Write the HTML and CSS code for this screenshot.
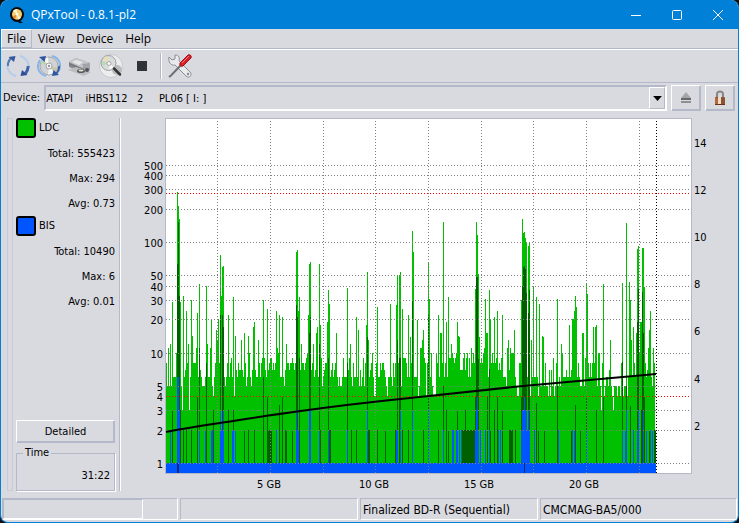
FILE: index.html
```html
<!DOCTYPE html>
<html lang="en">
<head>
<meta charset="utf-8">
<title>QPxTool - 0.8.1-pl2</title>
<link rel="stylesheet" href="styles.css">
</head>
<body>
<div class="window">
  <header class="titlebar">
    <svg class="logo" viewBox="0 0 16 16" aria-hidden="true">
      <ellipse cx="8" cy="7.5" rx="7" ry="7.5" fill="#080808"/>
      <path d="M8 12l6 4h-4z" fill="#080808"/>
      <ellipse cx="8" cy="7.3" rx="5" ry="5.4" fill="#f5cf70"/>
      <path d="M8 7.3L4 4A5 5.4 0 0 1 8 1.9z" fill="#fff4cf"/>
      <path d="M8 7.3l4 3.5A5 5.4 0 0 1 9 12.6z" fill="#fff4cf"/>
      <path d="M8 7.3L3.4 9.400A5 5.4 0 0 0 6 12.200z" fill="#e8892e"/>
      <circle cx="8" cy="7.3" r="1.3" fill="#fff"/>
    </svg>
    <h1 class="title">QPxTool - 0.8.1-pl2</h1>
    <button class="win-button" aria-label="Minimize"><svg viewBox="0 0 12 12"><path d="M1 6.5h10"/></svg></button>
    <button class="win-button" aria-label="Maximize"><svg viewBox="0 0 12 12"><rect x="1.5" y="1.5" width="9" height="9" rx="1"/></svg></button>
    <button class="win-button" aria-label="Close"><svg viewBox="0 0 12 12"><path d="M1 1l10 10M11 1L1 11"/></svg></button>
  </header>

  <nav class="menubar">
    <button class="menu menu-active">File</button>
    <button class="menu">View</button>
    <button class="menu">Device</button>
    <button class="menu">Help</button>
  </nav>

  <div class="toolbar">
    <button class="tool" aria-label="Rescan bus">
      <svg viewBox="0 0 24 24">
        <path d="M10 22C2 20-1 12 4 5" fill="none" stroke="#b4cdec" stroke-width="2"/>
        <path d="M2 12C1.500 9 2.500 7 5 4" fill="none" stroke="#5279b8" stroke-width="2"/>
        <path d="M2.500 3L9.500 2l-1.500 6z" fill="#34569f"/>
        <path d="M14 2c8 2 11 10 6 17" fill="none" stroke="#b4cdec" stroke-width="2"/>
        <path d="M22 12c.5 3-.5 5-3 8" fill="none" stroke="#3d62aa" stroke-width="3"/>
        <path d="M21.500 21l-7 1 1.500-6z" fill="#2d4f98"/>
      </svg>
    </button>
    <button class="tool" aria-label="Update device info">
      <svg viewBox="0 0 24 24">
        <circle cx="12" cy="12" r="9" fill="#d0d2d4" stroke="#a2a5a9"/>
        <path d="M12 12L6 5.500a9 9 0 0 1 5-2.300z" fill="#f7f7ee"/>
        <path d="M12 12l5 6.500a9 9 0 0 1-6 2z" fill="#f2f4f4"/>
        <path d="M12 12L3.500 9l2-3.500z" fill="#b6d6b6"/>
        <path d="M12 12l8.500 2-2 4z" fill="#c6c5ac"/>
        <circle cx="12" cy="12" r="3" fill="#f2f2f2" stroke="#a4a6aa"/>
        <circle cx="12" cy="12" r="1" fill="#777b80"/>
        <path d="M9 22C1 20-1 12 3 6" fill="none" stroke="#86b4e8" stroke-width="2"/>
        <path d="M2 3l7-1-1.500 6z" fill="#2d55a3"/>
        <path d="M15 2c8 2 10 10 6 16" fill="none" stroke="#86b4e8" stroke-width="2"/>
        <path d="M22 12c.5 3-.5 5-3 8" fill="none" stroke="#3d62aa" stroke-width="2"/>
        <path d="M22 21l-7 1 1.500-6z" fill="#2d55a3"/>
      </svg>
    </button>
    <button class="tool" aria-label="Device info">
      <svg viewBox="0 0 24 24">
        <path d="M1 8l7-4 14 5v7l-8 3L1 13z" fill="#8e9196"/>
        <path d="M1 8l7-4 14 5-8 5z" fill="#c4c6ca"/>
        <path d="M8 6l7 2-4 3-7-3z" fill="#e4e5e7"/>
        <path d="M1 9l13 5v2L1 11z" fill="#75787e"/>
        <path d="M0 16l8-3 15 5-7 4z" fill="#bbbdc0"/>
        <ellipse cx="13" cy="17" rx="4" ry="2" fill="#55585d"/>
        <ellipse cx="13" cy="16.500" rx="2.500" ry="1" fill="#e9e4cd"/>
        <path d="M14 10l8-1v6l-5 2z" fill="#a1a4a8"/>
        <circle cx="19" cy="16" r="2" fill="#505359"/>
      </svg>
    </button>
    <button class="tool" aria-label="Media info">
      <svg viewBox="0 0 24 24">
        <circle cx="12" cy="12" r="11.500" fill="#ededed" stroke="#c6c7c9"/>
        <circle cx="18" cy="16" r="5" fill="#b9bbbe"/>
        <circle cx="9.500" cy="9" r="7.500" fill="#d9dbdc" stroke="#9da0a4"/>
        <path d="M9.500 9L4 5a7 7 0 0 1 4-3z" fill="#eadfae"/>
        <path d="M9.500 9L4 12a7 7 0 0 1-1-5z" fill="#b9d9ba"/>
        <path d="M9.500 9l5 4a7 7 0 0 1-4 2.500z" fill="#f7f7f7"/>
        <circle cx="10" cy="9.500" r="2" fill="#fafafa" stroke="#a4a5a7"/>
        <path d="M15 14.500l6 6" stroke="#343434" stroke-width="2.500" stroke-linecap="round"/>
      </svg>
    </button>
    <button class="tool" aria-label="Stop">
      <svg viewBox="0 0 24 24"><rect x="7" y="7" width="10" height="10" fill="#303337"/></svg>
    </button>
    <span class="separator"></span>
    <button class="tool" aria-label="Preferences">
      <svg viewBox="0 0 24 24">
        <path d="M1 3l3 3 3-1V1c4 0 5 3 4 6l11 11c3 3-1 7-4 4L7 11C3 12 0 8 1 3z" fill="#e9eaec" stroke="#8a8d91"/>
        <circle cx="20" cy="20" r="1.200" fill="#8a8d91"/>
        <path d="M13 11L3 21.500l-2 1.500" fill="none" stroke="#6d7074" stroke-width="2"/>
        <path d="M12 9l8-8c2-1 4 1 3 3l-8 8c-2 1-4-1-3-3z" fill="#d8202a" stroke="#9d1019"/>
        <path d="M14 9l7-7" stroke="#f27d80"/>
      </svg>
    </button>
  </div>

  <div class="device-row">
    <label for="device">Device:</label>
    <div class="combo">
      <select id="device"><option>ATAPI &nbsp;&nbsp; iHBS112 &nbsp; 2 &nbsp;&nbsp;&nbsp; PL06 [ I: ]</option></select>
      <span class="combo-arrow"><svg viewBox="0 0 7 4"><path d="M0 0h7L3.500 4z"/></svg></span>
    </div>
    <button class="push icon-push" aria-label="Eject">
      <svg viewBox="0 0 14 16"><path d="M7 2l5 6H2z" fill="#a4a6a8"/><path d="M2 8h10v2H2z" fill="#66696c"/><path d="M2 11h10v2H2z" fill="#8d9092"/></svg>
    </button>
    <button class="push icon-push" aria-label="Lock">
      <svg viewBox="0 0 14 16">
        <path d="M4 8V4c0-3.500 6-3.500 6 0v4" fill="none" stroke="#8d8581" stroke-width="2"/>
        <rect x="2" y="7" width="10" height="8" rx="1" fill="#8a5333"/>
        <path d="M2 8h3v6H2z" fill="#b06840"/><path d="M5 7h3v8H5z" fill="#f3d9c0"/><path d="M2 14h10v1H2z" fill="#6b3217"/>
      </svg>
    </button>
  </div>

  <main class="content">
    <aside class="panel">
      <div class="grip"></div>
      <div class="stats">
        <section class="series">
          <h2 class="series-name"><span class="swatch swatch-ldc"></span>LDC</h2>
          <p>Total: 555423</p><p>Max: 294</p><p>Avg: 0.73</p>
        </section>
        <section class="series">
          <h2 class="series-name"><span class="swatch swatch-bis"></span>BIS</h2>
          <p>Total: 10490</p><p>Max: 6</p><p>Avg: 0.01</p>
        </section>
        <button class="push detailed">Detailed</button>
        <fieldset class="time"><legend>Time</legend>31:22</fieldset>
      </div>
      <div class="divider"></div>
    </aside>
    <svg class="chart" viewBox="0 0 616 384" role="img" aria-label="LDC and BIS errors with read speed">
      <rect class="plot-frame" x="43" y="5" width="527" height="356"/>
      <rect class="plot-back" x="44" y="6" width="525" height="354"/>
      <g transform="translate(44 6)">
        <path id="ldc" class="ldc"/>
        <path id="overlap" class="overlap"/>
        <rect class="bis" x="0" y="344" width="490" height="10"/>
        <path id="bis" class="bis"/>
        <path class="peak" d="M11 344h2v10h-2zM358 344h1v10h-1z"/>
        <path id="grid" class="grid"/>
        <path class="grid limit" d="M0 74.500H524M0 277.500H524"/>
        <path class="grid end" d="M490.500 2V354"/>
        <path class="speed" d="M0 313C15 310 34 307 54 304C80 300 105 296 131 292.500C170 287 205 283 244 279C282 275 320 271 357 267C400 263 445 259 490 255"/>
      </g>
      <g id="labels"></g>
    </svg>
  </main>

  <footer class="statusbar">
    <div class="cell"><div class="progress"></div></div>
    <div class="cell"></div>
    <div class="cell">Finalized BD-R (Sequential)</div>
    <div class="cell cell-last">CMCMAG-BA5/000</div>
  </footer>
</div>
<script src="chart.js"></script>
</body>
</html>
```
FILE: styles.css
```css
:root {
  --face: #d9dae0;
  --light: #fff;
  --shade: #b4b9c9;
  --accent: #0080d7;
}

* { box-sizing: border-box; }

body {
  margin: 0;
  background: #101010;
  font: 11px/16px "DejaVu Sans Condensed", "DejaVu Sans", sans-serif;
  color: #000;
}

button, select { font: inherit; color: inherit; border: 0; padding: 0; background: none; }
h1, h2, p { margin: 0; font-size: inherit; font-weight: normal; }
svg { display: block; }

.window {
  display: flex;
  flex-direction: column;
  min-height: 100vh;
  background: var(--face);
  border: 1px solid var(--accent);
  border-top: 0;
  border-radius: 8px;
  overflow: hidden;
}

.titlebar {
  display: flex;
  align-items: center;
  height: 29px;
  padding-left: 8px;
  background: var(--accent);
  color: #fff;
}
.logo { width: 16px; height: 16px; margin-right: 6px; }
.title { flex: 1; font: 12px/16px "Open Sans", sans-serif; }
.win-button { display: grid; place-items: center; width: 41px; height: 28px; }
.win-button svg { width: 12px; height: 12px; fill: none; stroke: #fff; }

.menubar {
  display: flex;
  height: 21px;
  border-bottom: 1px solid var(--light);
  box-shadow: inset 0 -1px var(--shade);
  font: 12px/16px "Open Sans", sans-serif;
}
.menu { height: 19px; padding: 0 6px; }
.menu-active { padding: 0 5px; border: 1px solid var(--shade); border-top-color: var(--light); border-left-color: var(--light); }

.toolbar {
  display: flex;
  align-items: center;
  height: 33px;
  padding-left: 1px;
  border-bottom: 1px solid var(--shade);
}
.tool { display: grid; place-items: center; width: 31px; height: 31px; }
.tool svg { width: 24px; height: 24px; }
.separator { width: 2px; height: 26px; margin: 0 2px 0 3px; background: var(--light); border-left: 1px solid var(--shade); }

.device-row { display: flex; align-items: center; gap: 4px; height: 30px; padding: 0 3px 0 2px; }
.combo {
  position: relative;
  flex: 1;
  height: 26px;
  border: 2px solid;
  border-color: var(--shade) var(--light) var(--light) var(--shade);
}
.combo select { width: 100%; height: 24px; appearance: none; outline: 0; }
.combo-arrow {
  position: absolute;
  top: 0;
  right: 0;
  display: grid;
  place-items: center;
  width: 16px;
  height: 22px;
  border: 1px solid;
  border-color: var(--light) var(--shade) var(--shade) var(--light);
  pointer-events: none;
}
.combo-arrow svg { width: 9px; height: 5px; }

.push {
  border: 1px solid;
  border-color: var(--light) var(--shade) var(--shade) var(--light);
  box-shadow: inset -1px -1px var(--shade);
}
.icon-push { display: grid; place-items: center; width: 30px; height: 26px; }
.icon-push svg { width: 14px; height: 16px; }

.content { display: flex; flex: 1; }
.panel { display: flex; width: 121px; padding: 5px 1px 6px 6px; }
.grip { width: 6px; border: 1px solid #c9ccd5; }
.stats { display: flex; flex-direction: column; flex: 1; padding: 0 4px 0 3px; }
.divider { width: 2px; background: var(--light); border-left: 1px solid var(--shade); }
.series { height: 98px; text-align: right; }
.series p { height: 25px; }
.series-name { display: flex; align-items: center; gap: 3px; height: 28px; padding-bottom: 8px; line-height: 18px; }
.swatch { width: 20px; height: 20px; border: 2px solid #000; border-radius: 3px; }
.swatch-ldc { background: #00c000; }
.swatch-bis { background: #0055ff; }
.detailed { height: 23px; margin-top: auto; }
.time {
  min-width: 0;
  height: 45px;
  margin: 3px 0 0;
  padding: 8px 4px 0;
  border: 1px solid var(--shade);
  box-shadow: 1px 1px var(--light);
  text-align: right;
}
.time legend { height: 14px; line-height: 14px; padding: 0 2px; margin-left: 2px; text-align: left; }

.chart { flex: 1; min-width: 0; align-self: start; height: auto; }
.plot-frame { fill: var(--shade); }
.plot-back { fill: #fff; }
.ldc, .overlap, .bis, .peak { shape-rendering: crispEdges; }
.ldc { fill: #00c000; }
.overlap { fill: #006000; }
.bis { fill: #0055ff; }
.peak { fill: #002a80; }
.grid { fill: none; stroke: #808080; stroke-dasharray: 1 2; shape-rendering: crispEdges; }
.limit { stroke: #f00; }
.end { stroke: #000; }
.speed { fill: none; stroke: #000; stroke-width: 2; }
.axis-left { text-anchor: end; }
.axis-bottom { text-anchor: middle; }

.statusbar { display: flex; gap: 2px; height: 25px; padding: 1px; font-size: 12px; line-height: 22px; }
.cell {
  flex: 1 1 0;
  height: 22px;
  padding-left: 2px;
  border: 1px solid;
  border-color: var(--shade) var(--light) var(--light) var(--shade);
  white-space: nowrap;
}
.cell:first-child { padding-left: 0; }
.cell-last { flex: 0 0 197px; }
.progress { width: 140px; height: 20px; border: 1px solid; border-color: var(--shade) var(--light) var(--light) var(--shade); }
```
FILE: chart.js
```js
// Error counts per column, one base-36 digit each.
const floor = [
  "85b5c55666a66665366778c366e888b6667655566c66bk5468",
  "gdk8888865686689664e76877d76f856ea657hj766d8689997",
  "66789978788ba6666657c8878898788886" + "7c88789a88678c6",
  "7f66999567888766786787656556966657" + "9c65866565575695",
  "888d678a6448b668788765466a65868888865599986e688766",
  "66545bbd998488a6a5444a876f6866866699ca989a8ea7779a",
  "79a696b8a8aaae8898abbfa6b88a888997879b6665bd7baaa8",
  "6544888888876644d6666664555ed58554747594584565ca66",
  "6766667kkk9568655f6599586868h8665aa5384456657d5435",
  "55455486455646e6d6h86ffbajc889867b8765b8",
].join("");

// Peaks and bars below are column:top pairs in plot units.
const peaks =
  "6:183 11:73 12:87 13:100 14:183 17:177 20:192 25:181 31:194 33:165 40:167 54:136 55:177 56:148 57:147 62:196 67:178 " +
  "97:181 101:190 110:192 113:196 116:198 130:133 131:131 132:192 133:178 142:196 143:145 144:143 151:208 153:145 154:206 " +
  "161:203 162:171 163:185 170:214 181:169 190:198 192:211 200:206 201:153 211:188 224:185 230:186 231:156 233:156 234:153 " +
  "236:190 242:196 244:218 246:112 247:133 251:201 257:211 262:144 263:180 272:196 275:214 277:103 280:203 282:178 291:203 " +
  "293:218 309:170 310:103 311:116 312:155 313:218 319:180 321:214 323:171 324:200 328:198 331:192 336:196 348:211 355:181 " +
  "356:100 357:114 358:113 359:119 360:123 362:127 363:124 367:168 370:178 373:185 377:218 391:180 403:206 407:214 408:192 " +
  "409:177 410:188 417:214 420:165 421:175 429:208 430:206 437:165 444:221 456:164 460:104 463:163 464:181 467:218 470:214 " +
  "471:130 472:127 475:203 476:129 477:129 478:168 483:211 484:192";
const overlap =
  "6:291 11:145 12:103 13:177 14:291 17:311 20:311 25:311 31:278 33:229 40:244 47:291 54:196 56:196 57:208 62:291 67:291 " +
  "78:311 82:311 88:311 97:258 101:278 102:311 103:311 104:311 105:311 113:286 116:278 119:311 120:311 126:311 130:186 " +
  "131:198 133:239 143:214 144:198 153:225 154:311 162:239 163:311 164:311 181:244 185:311 190:311 201:218 202:311 203:311 " +
  "211:311 219:311 229:311 231:221 233:239 234:239 236:311 242:311 246:182 257:311 262:196 272:311 277:267 280:291 282:311 " +
  "291:291 296:311 297:311 298:311 299:291 300:311 301:311 302:311 303:311 304:311 305:311 306:311 307:311 308:311 309:278 " +
  "310:158 311:158 312:240 321:278 323:250 324:311 328:291 331:278 336:291 343:311 344:311 345:311 346:311 349:311 355:278 " +
  "356:167 357:148 358:147 359:150 360:174 362:194 363:171 370:284 372:311 378:311 391:267 405:311 409:286 414:311 420:278 " +
  "430:291 437:278 456:243 460:267 464:287 467:311 471:203 472:170 475:291 476:173 477:214 478:278 483:311 488:311 489:311";
const bis =
  "4:311 11:258 12:258 13:291 33:311 39:311 45:311 46:311 54:291 55:311 56:311 57:291 66:311 67:311 69:311 110:311 130:291 " +
  "131:311 132:311 143:291 144:291 153:311 162:311 181:311 201:291 230:311 231:311 234:291 246:291 262:291 277:311 286:311 " +
  "287:311 290:311 291:311 293:311 295:311 309:311 310:291 311:278 312:311 314:311 319:311 323:311 332:311 334:311 355:311 " +
  "356:291 357:291 358:278 359:291 360:291 361:311 362:291 363:311 368:311 392:311 406:311 408:311 420:311 456:311 459:311 " +
  "460:291 467:311 471:311 472:291 477:291 480:311 484:311 486:311";

const column = (x, y) => `M${x} ${y}h1V344h-1z`;
const bars = (text) => text.split(" ").map((pair) => column(...pair.split(":"))).join("");
const level = (value) => Math.round(344 - 110.5 * Math.log10(value));
const setPath = (id, d) => document.getElementById(id).setAttribute("d", d);

const columns = [...floor].slice(0, 490).map((digit, x) => column(x, level(parseInt(digit, 36))));
setPath("ldc", columns.join("") + bars(peaks));
setPath("overlap", bars(overlap));
setPath("bis", bars(bis));

const counts = [1, 2, 3, 4, 5, 10, 20, 30, 40, 50, 100, 200, 300, 400, 500];
const rows = counts.filter((n) => n !== 4).map((n) => `M0 ${level(n) + 0.5}H524`);
const lines = [51, 104, 157, 209, 262, 315, 367, 420, 473].map((x) => `M${x + 0.5} 2V354`);
setPath("grid", rows.concat(lines).join(""));

const labels = document.getElementById("labels");
function addLabel(text, x, y, className) {
  const node = document.createElementNS("http://www.w3.org/2000/svg", "text");
  node.setAttribute("x", x);
  node.setAttribute("y", y);
  node.setAttribute("class", className);
  node.textContent = text;
  labels.append(node);
}
counts.forEach((n) => addLabel(n, 41, level(n) + 11, "axis-left"));
[2, 4, 6, 8, 10, 12, 14].forEach((n) => addLabel(n, 572, Math.round(364 - n * 23.6), "axis-right"));
[5, 10, 15, 20].forEach((n) => addLabel(`${n} GB`, 42 + n * 21, 375, "axis-bottom"));
```
